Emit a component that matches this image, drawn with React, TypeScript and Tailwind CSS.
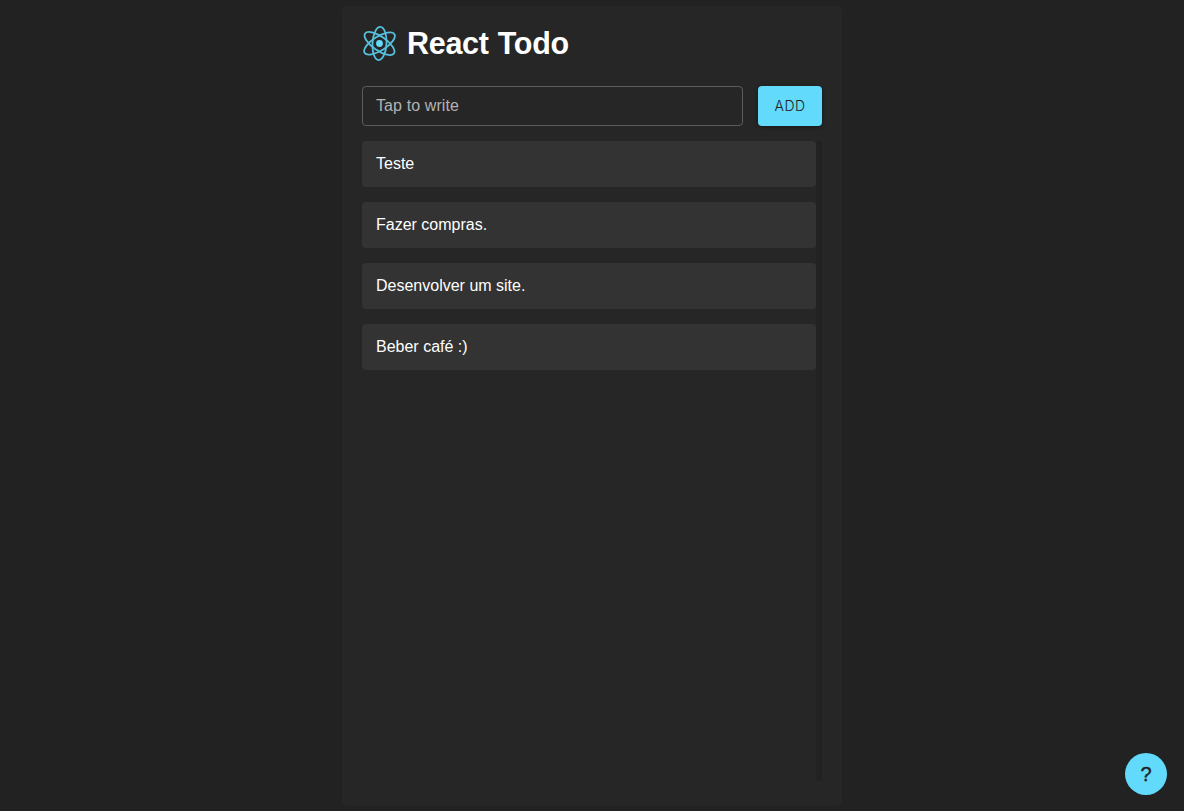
const todos = ["Teste", "Fazer compras.", "Desenvolver um site.", "Beber café :)"];

function ReactLogo() {
  return (
    <svg className="h-[35px] w-[35px] shrink-0" viewBox="-17.5 -17.5 35 35" fill="none" aria-hidden="true">
      <circle r="3.4" fill="#61dafb" />
      <g stroke="#55bfdc" strokeWidth="1.8">
        <ellipse rx="17.6" ry="7" transform="rotate(35)" />
        <ellipse rx="16.6" ry="7" transform="rotate(93)" />
        <ellipse rx="17.6" ry="7" transform="rotate(148)" />
      </g>
    </svg>
  );
}

export default function App() {
  return (
    <div className="flex h-screen items-center justify-center overflow-hidden bg-[#222222] font-['Liberation_Sans',Arial,sans-serif] text-white">
      <main className="flex h-[800px] w-[500px] flex-col rounded-[5px] bg-[#262626] px-5 pt-5 pb-[25px]">
        <header className="flex h-[35px] items-center gap-2.5">
          <ReactLogo />
          <h1 className="text-[30.5px] leading-[35px] font-bold tracking-[-0.3px] [word-spacing:1px]">React Todo</h1>
        </header>
        <form className="mt-[25px] flex h-10 gap-[15px]" onSubmit={(e) => e.preventDefault()}>
          <input
            className="min-w-0 flex-1 rounded-[4px] border border-[#5c5c5c] bg-transparent px-[13px] text-base tracking-[0.1px] text-white outline-none placeholder:text-[#b3b3b3] placeholder:opacity-100"
            placeholder="Tap to write"
          />
          <button className="w-16 rounded-[4px] bg-[#61dafb] font-[Inter,sans-serif] text-sm font-light tracking-[0.4px] text-[#222222] shadow-[0_1px_4px_rgba(0,0,0,0.4)]">
            ADD
          </button>
        </form>
        <div className="mt-[15px] flex min-h-0 flex-1">
          <ul className="flex flex-1 flex-col gap-[15px]">
            {todos.map((todo) => (
              <li key={todo} className="flex h-[46px] items-center rounded-[4px] bg-[#333333] px-3.5 text-base">
                {todo}
              </li>
            ))}
          </ul>
          <div className="w-1.5 bg-[#222222]" />
        </div>
      </main>
      <button className="fixed right-[17px] bottom-4 flex h-[42px] w-[42px] items-center justify-center rounded-full bg-[#61dafb] text-xl text-[#222222] [-webkit-text-stroke:0.4px_#222222]">
        ?
      </button>
    </div>
  );
}
